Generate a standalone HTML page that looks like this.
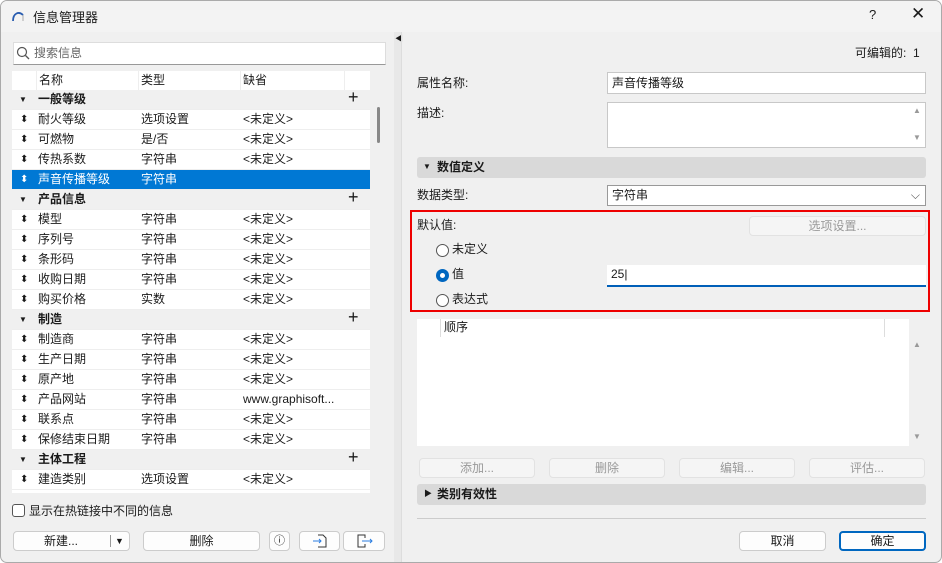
<!DOCTYPE html>
<html><head><meta charset="utf-8"><style>
*{box-sizing:border-box;margin:0;padding:0}
body{width:942px;height:563px;overflow:hidden;background:#fff;font-family:"Liberation Sans","Noto Sans CJK SC",sans-serif;font-size:12px;color:#1a1a1a;position:relative}
.win{position:absolute;left:0;top:0;width:942px;height:563px;background:#f0f0f0;border:1px solid #aaa;border-radius:7px;overflow:hidden}
.a{position:absolute}
.title{left:0;top:0;width:942px;height:31px;background:#f3f3f3}
.row{position:absolute;left:11px;width:358px;height:20px;background:#fff;border-bottom:1px solid #eee;line-height:19px}
.row span{position:absolute}
.grp{background:#f0f0f0;font-weight:bold}
.sel{background:#0078d4;color:#fff}
.btn{position:absolute;height:20px;border:1px solid #ccc;border-radius:4px;background:#fdfdfd;text-align:center;line-height:18px}
.dis{color:#999;background:#f5f5f5;border-color:#e2e2e2}
.inp{position:absolute;background:#fff;border:1px solid #c8c8c8;padding-left:4px;line-height:20px}
.radio{position:absolute;width:13px;height:13px;border:1px solid #555;border-radius:50%;background:#fff}
</style></head><body><div class="win">
<div class="a title"></div>
<svg class="a" style="left:10px;top:8px" width="14" height="14"><path d="M2 12 C2 4 8 2 12 6" stroke="#2a5db0" stroke-width="1.8" fill="none"/><path d="M12 6 L12 12" stroke="#aaa" stroke-width="1"/></svg>
<div class="a" style="left:32px;top:6px;font-size:13px">信息管理器</div>
<div class="a" style="left:868px;top:6px;font-size:13px">?</div>
<div class="a" style="left:910px;top:3px;font-size:17px">✕</div>
<!-- left -->
<div class="inp" style="left:12px;top:41px;width:373px;height:23px;color:#666;padding-left:20px;border-color:#ddd;border-bottom-color:#999">搜索信息</div>
<svg class="a" style="left:15px;top:45px" width="14" height="14"><circle cx="6" cy="6" r="4.5" stroke="#555" fill="none" stroke-width="1.2"/><path d="M9.5 9.5 L13 13" stroke="#555" stroke-width="1.3"/></svg>
<div class="a" style="left:11px;top:70px;width:358px;height:19px;background:#fff;line-height:19px">
<span class="a" style="left:24px;top:0;bottom:0;border-left:1px solid #eee"></span><span class="a" style="left:27px">名称</span>
<span class="a" style="left:126px;top:0;bottom:0;border-left:1px solid #eee"></span><span class="a" style="left:129px">类型</span>
<span class="a" style="left:228px;top:0;bottom:0;border-left:1px solid #eee"></span><span class="a" style="left:231px">缺省</span>
<span class="a" style="left:332px;top:0;bottom:0;border-left:1px solid #eee"></span></div>
<div id="rows"></div>
<div class="a" style="left:11px;top:489px;width:358px;height:3px;background:#fff"></div>
<div class="a" style="left:376px;top:106px;width:3px;height:36px;background:#888;border-radius:2px"></div>
<div class="a" style="left:11px;top:503px;width:13px;height:13px;border:1px solid #555;border-radius:3px;background:#fff"></div>
<div class="a" style="left:28px;top:501px">显示在热链接中不同的信息</div>
<div class="btn" style="left:12px;top:530px;width:117px;text-align:left;padding-left:30px">新建...<span class="a" style="left:96px;top:3px;height:12px;border-left:1px solid #999"></span><span class="a" style="left:101px;top:0;font-size:9px">▼</span></div>
<div class="btn" style="left:142px;top:530px;width:117px">删除</div>
<div class="btn" style="left:268px;top:530px;width:21px;font-size:11px">ⓘ</div>
<div class="btn" style="left:298px;top:530px;width:41px"><svg width="20" height="16" style="margin-top:1px"><path d="M8 2h5l3 3v9H8" stroke="#333" fill="none"/><path d="M3 8h8M9 6l2 2-2 2" stroke="#2a7de1" fill="none"/></svg></div>
<div class="btn" style="left:342px;top:530px;width:42px"><svg width="20" height="16" style="margin-top:1px"><path d="M11 5V2H4v12h7v-3" stroke="#333" fill="none"/><path d="M8 8h10M16 6l2 2-2 2" stroke="#2a7de1" fill="none"/></svg></div>
<div class="a" style="left:393px;top:31px;width:7px;height:532px;background:#e8e8e8"></div>
<div class="a" style="left:394px;top:32px;font-size:8px">◀</div>
<div class="a" style="left:400px;top:31px;width:1px;height:532px;background:#ddd"></div>
<!-- right -->
<div class="a" style="left:854px;top:43px">可编辑的:&nbsp;&nbsp;1</div>
<div class="a" style="left:416px;top:73px">属性名称:</div>
<div class="inp" style="left:606px;top:71px;width:319px;height:22px">声音传播等级</div>
<div class="a" style="left:416px;top:103px">描述:</div>
<div class="inp" style="left:606px;top:101px;width:319px;height:46px"></div>
<div class="a" style="left:912px;top:105px;font-size:8px;color:#999">▲</div><div class="a" style="left:912px;top:132px;font-size:8px;color:#999">▼</div>
<div class="a" style="left:416px;top:156px;width:509px;height:21px;background:#d9d9d9;border-radius:3px;font-weight:bold;line-height:20px;padding-left:20px">数值定义<span class="a" style="left:6px;top:0;font-size:8px">▼</span></div>
<div class="a" style="left:416px;top:185px">数据类型:</div>
<div class="inp" style="left:606px;top:184px;width:319px;height:21px;border-color:#999;line-height:18px">字符串<span class="a" style="right:5px;top:0;color:#555">⌵</span></div>
<div class="a" style="left:409px;top:209px;width:520px;height:102px;border:2px solid #e00"></div>
<div class="a" style="left:416px;top:215px">默认值:</div>
<div class="btn dis" style="left:748px;top:215px;width:177px">选项设置...</div>
<div class="radio" style="left:435px;top:243px"></div><div class="a" style="left:451px;top:239px">未定义</div>
<div class="radio" style="left:435px;top:268px;background:#0067c0;border-color:#0067c0"><div style="position:absolute;left:3px;top:3px;width:5px;height:5px;border-radius:50%;background:#fff"></div></div><div class="a" style="left:451px;top:264px">值</div>
<div class="radio" style="left:435px;top:293px"></div><div class="a" style="left:451px;top:289px">表达式</div>
<div class="a" style="left:606px;top:264px;width:319px;height:22px;background:#fff;border-bottom:2px solid #005fb8;padding-left:4px;line-height:19px">25|</div>
<div class="a" style="left:416px;top:318px;width:492px;height:127px;background:#fff"></div>
<div class="a" style="left:439px;top:318px;width:1px;height:18px;background:#ddd"></div>
<div class="a" style="left:883px;top:318px;width:1px;height:18px;background:#ddd"></div>
<div class="a" style="left:443px;top:317px">顺序</div>
<div class="a" style="left:912px;top:339px;font-size:8px;color:#999">▲</div><div class="a" style="left:912px;top:431px;font-size:8px;color:#999">▼</div>
<div class="btn dis" style="left:418px;top:457px;width:116px">添加...</div>
<div class="btn dis" style="left:548px;top:457px;width:116px">删除</div>
<div class="btn dis" style="left:678px;top:457px;width:116px">编辑...</div>
<div class="btn dis" style="left:808px;top:457px;width:116px">评估...</div>
<div class="a" style="left:416px;top:483px;width:509px;height:21px;background:#d9d9d9;border-radius:3px;font-weight:bold;line-height:20px;padding-left:20px">类别有效性<span class="a" style="left:7px;top:0;font-size:8px">▶</span></div>
<div class="a" style="left:416px;top:517px;width:509px;height:1px;background:#ccc"></div>
<div class="btn" style="left:738px;top:530px;width:87px">取消</div>
<div class="btn" style="left:838px;top:530px;width:87px;border:2px solid #0067c0;line-height:16px">确定</div>
</div>
<script>
var d=[["g","一般等级"],["耐火等级","选项设置","<未定义>"],["可燃物","是/否","<未定义>"],["传热系数","字符串","<未定义>"],["s","声音传播等级","字符串",""],["g","产品信息"],["模型","字符串","<未定义>"],["序列号","字符串","<未定义>"],["条形码","字符串","<未定义>"],["收购日期","字符串","<未定义>"],["购买价格","实数","<未定义>"],["g","制造"],["制造商","字符串","<未定义>"],["生产日期","字符串","<未定义>"],["原产地","字符串","<未定义>"],["产品网站","字符串","www.graphisoft..."],["联系点","字符串","<未定义>"],["保修结束日期","字符串","<未定义>"],["g","主体工程"],["建造类别","选项设置","<未定义>"]];
var h="";d.forEach(function(r,i){var y=89+i*20;if(r[0]=="g"){h+='<div class="row grp" style="top:'+y+'px"><span style="left:7px;font-size:8px">▼</span><span style="left:26px">'+r[1]+'</span><span style="left:336px;font-size:18px;font-weight:normal;top:-2px">+</span></div>';}else{var c="",o=r;if(r[0]=="s"){c=" sel";o=r.slice(1);}var e=o[2].replace(/</g,"&lt;").replace(/>/g,"&gt;");h+='<div class="row'+c+'" style="top:'+y+'px"><span style="left:8px;font-size:10px">⬍</span><span style="left:26px">'+o[0]+'</span><span style="left:129px">'+o[1]+'</span><span style="left:231px">'+e+'</span></div>';}});
document.getElementById("rows").outerHTML=h;
</script>
</body></html>
